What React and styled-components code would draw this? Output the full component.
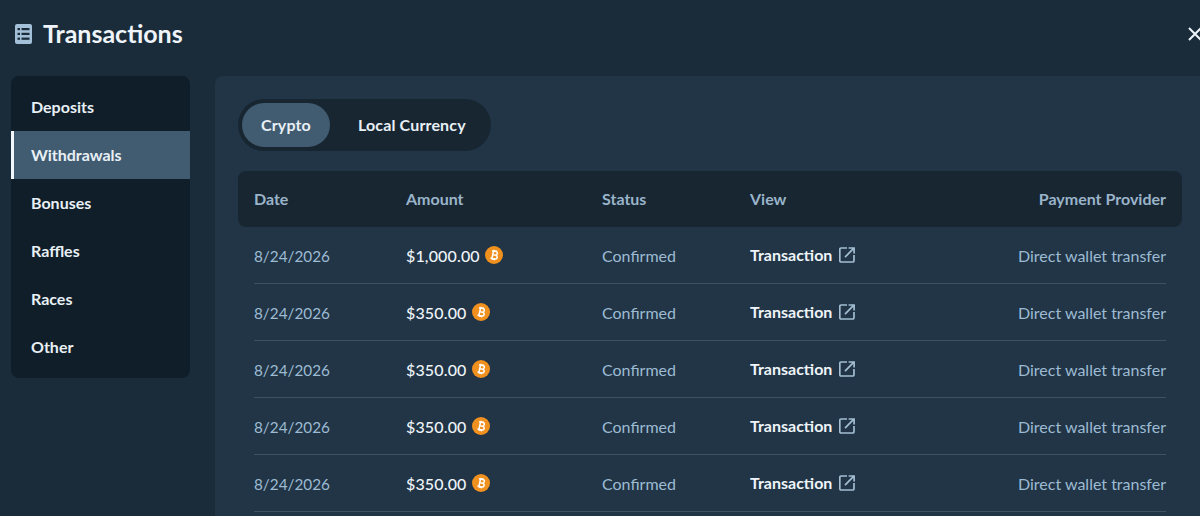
import styled, { createGlobalStyle } from "styled-components";

const GlobalStyle = createGlobalStyle`
  html, body {
    margin: 0;
    height: 516px;
    overflow: hidden;
    background: #1a2c3a;
  }
  * { box-sizing: border-box; }
`;

const Page = styled.div`
  width: 1200px;
  height: 516px;
  overflow: hidden;
  font-family: "Lato", "Liberation Sans", sans-serif;
  background: #1a2c3a;
  color: #eef4f9;
`;

const Header = styled.header`
  height: 76px;
  display: flex;
  align-items: center;
  justify-content: space-between;
  padding: 0 0 8px 15px;
`;

const HeaderTitle = styled.h1`
  margin: 0;
  display: flex;
  align-items: center;
  gap: 11px;
  font-size: 25px;
  font-weight: 700;
  line-height: 28px;
`;

const TitleText = styled.span`
  padding-bottom: 2px;
`;

const CloseButton = styled.button`
  width: 12px;
  height: 24px;
  padding: 0;
  border: 0;
  background: none;
  overflow: hidden;
  display: flex;
  color: #eef4f9;
`;

const CloseSvg = styled.svg`
  flex-shrink: 0;
`;

const Body = styled.div`
  display: flex;
  align-items: flex-start;
  gap: 25px;
  padding-left: 11px;
`;

const Sidebar = styled.nav`
  width: 179px;
  flex-shrink: 0;
  padding: 7px 0;
  background: #0f1e28;
  border-radius: 8px;
`;

const SideItem = styled.div`
  height: 48px;
  display: flex;
  align-items: center;
  padding-left: ${(p) => (p.$active ? "17px" : "20px")};
  padding-bottom: 1px;
  font-size: 16px;
  font-weight: 700;
  color: #e8f0f6;
  background: ${(p) => (p.$active ? "#415b70" : "transparent")};
  border-left: ${(p) => (p.$active ? "3px solid #f1f6fa" : "0")};
`;

const Panel = styled.main`
  width: 990px;
  flex-shrink: 0;
  height: 440px;
  padding: 23px 23px 0;
  background: #213546;
  border-radius: 8px 0 0 0;
`;

const Tabs = styled.div`
  display: inline-flex;
  padding: 4px 5px 4px 4px;
  gap: 8px;
  background: #182632;
  border-radius: 26px;
`;

const Tab = styled.div`
  height: 44px;
  padding: 0 ${(p) => (p.$active ? "19px" : "20px")} 2px;
  display: flex;
  align-items: center;
  border-radius: 22px;
  font-size: 16px;
  font-weight: 700;
  letter-spacing: 0.15px;
  color: #e8f0f6;
  background: ${(p) => (p.$active ? "#415b70" : "transparent")};
`;

const Columns = styled.div`
  display: grid;
  grid-template-columns: 152px 196px 148px 1fr 1fr;
  align-items: center;
`;

const TableHead = styled(Columns)`
  margin-top: 20px;
  height: 56px;
  width: 944px;
  padding: 0 16px 2px;
  background: #182632;
  border-radius: 8px;
  font-size: 16px;
  font-weight: 700;
  color: #9ab4ca;
`;

const Row = styled(Columns)`
  height: 57px;
  width: 912px;
  margin-left: 16px;
  border-bottom: 1px solid #3c5262;
  font-size: 16px;
  color: #9dbbd3;
`;

const DateCell = styled.div`
  padding-top: 2px;
  font-size: 15.3px;
`;

const Amount = styled.div`
  display: flex;
  align-items: center;
  gap: 5px;
  font-weight: 500;
  letter-spacing: 0.15px;
  color: #eef4f9;
`;

const ViewLink = styled.div`
  display: flex;
  align-items: center;
  gap: 7px;
  padding-bottom: 2px;
  font-weight: 700;
  color: #eef4f9;
`;

const ExternalSvg = styled.svg`
  margin-top: 1px;
`;

const RightCell = styled.div`
  text-align: right;
`;

const ListIcon = () => (
  <svg width="17" height="20" viewBox="0 0 17 20">
    <rect width="17" height="20" rx="2" fill="#a3c0d8" />
    <g fill="#1a2c3a">
      <rect x="2.5" y="4" width="2.5" height="2.2" />
      <rect x="6.5" y="4" width="8" height="2.2" />
      <rect x="2.5" y="8.8" width="2.5" height="2.2" />
      <rect x="6.5" y="8.8" width="8" height="2.2" />
      <rect x="2.5" y="13.6" width="2.5" height="2.2" />
      <rect x="6.5" y="13.6" width="8" height="2.2" />
    </g>
  </svg>
);

const BitcoinIcon = () => (
  <svg width="18" height="18" viewBox="0 0 18 18">
    <circle cx="9" cy="9" r="9" fill="#f0911f" />
    <g transform="rotate(12 9 9)">
      <path
        d="M6.2 5.2h3.9a1.8 1.8 0 0 1 0 3.7H7.7h3a1.9 1.9 0 0 1 0 3.8H6.2M7.7 5.2v7.5M8.2 3.9v1.3M10.2 3.9v1.3M8.2 12.8v1.3M10.2 12.8v1.3"
        fill="none"
        stroke="#fff"
        strokeWidth="1.5"
      />
    </g>
  </svg>
);

const ExternalIcon = () => (
  <ExternalSvg width="16" height="16" viewBox="0 0 16 16" fill="none" stroke="#a3bdd2" strokeWidth="1.7">
    <path d="M8 1H2a1.2 1.2 0 0 0-1.2 1.2v11.6A1.2 1.2 0 0 0 2 15h11.8a1.2 1.2 0 0 0 1.2-1.2V8" />
    <path d="M6 10.2L14.6 1.4M9.6 1h5.5v5.5" />
  </ExternalSvg>
);

const rows = ["$1,000.00", "$350.00", "$350.00", "$350.00", "$350.00"];
const menu = ["Deposits", "Withdrawals", "Bonuses", "Raffles", "Races", "Other"];

export default function App() {
  return (
    <Page>
      <GlobalStyle />
      <Header>
        <HeaderTitle>
          <ListIcon />
          <TitleText>Transactions</TitleText>
        </HeaderTitle>
        <CloseButton aria-label="Close">
          <CloseSvg width="24" height="24" viewBox="0 0 24 24" fill="none" stroke="currentColor" strokeWidth="2">
            <path d="M1 6l12 12M13 6L1 18" />
          </CloseSvg>
        </CloseButton>
      </Header>
      <Body>
        <Sidebar>
          {menu.map((item) => (
            <SideItem key={item} $active={item === "Withdrawals"}>
              {item}
            </SideItem>
          ))}
        </Sidebar>
        <Panel>
          <Tabs>
            <Tab $active>Crypto</Tab>
            <Tab>Local Currency</Tab>
          </Tabs>
          <TableHead>
            <div>Date</div>
            <div>Amount</div>
            <div>Status</div>
            <div>View</div>
            <RightCell>Payment Provider</RightCell>
          </TableHead>
          {rows.map((amount, i) => (
            <Row key={i}>
              <DateCell>8/24/2026</DateCell>
              <Amount>
                {amount}
                <BitcoinIcon />
              </Amount>
              <div>Confirmed</div>
              <ViewLink>
                Transaction
                <ExternalIcon />
              </ViewLink>
              <RightCell>Direct wallet transfer</RightCell>
            </Row>
          ))}
        </Panel>
      </Body>
    </Page>
  );
}
